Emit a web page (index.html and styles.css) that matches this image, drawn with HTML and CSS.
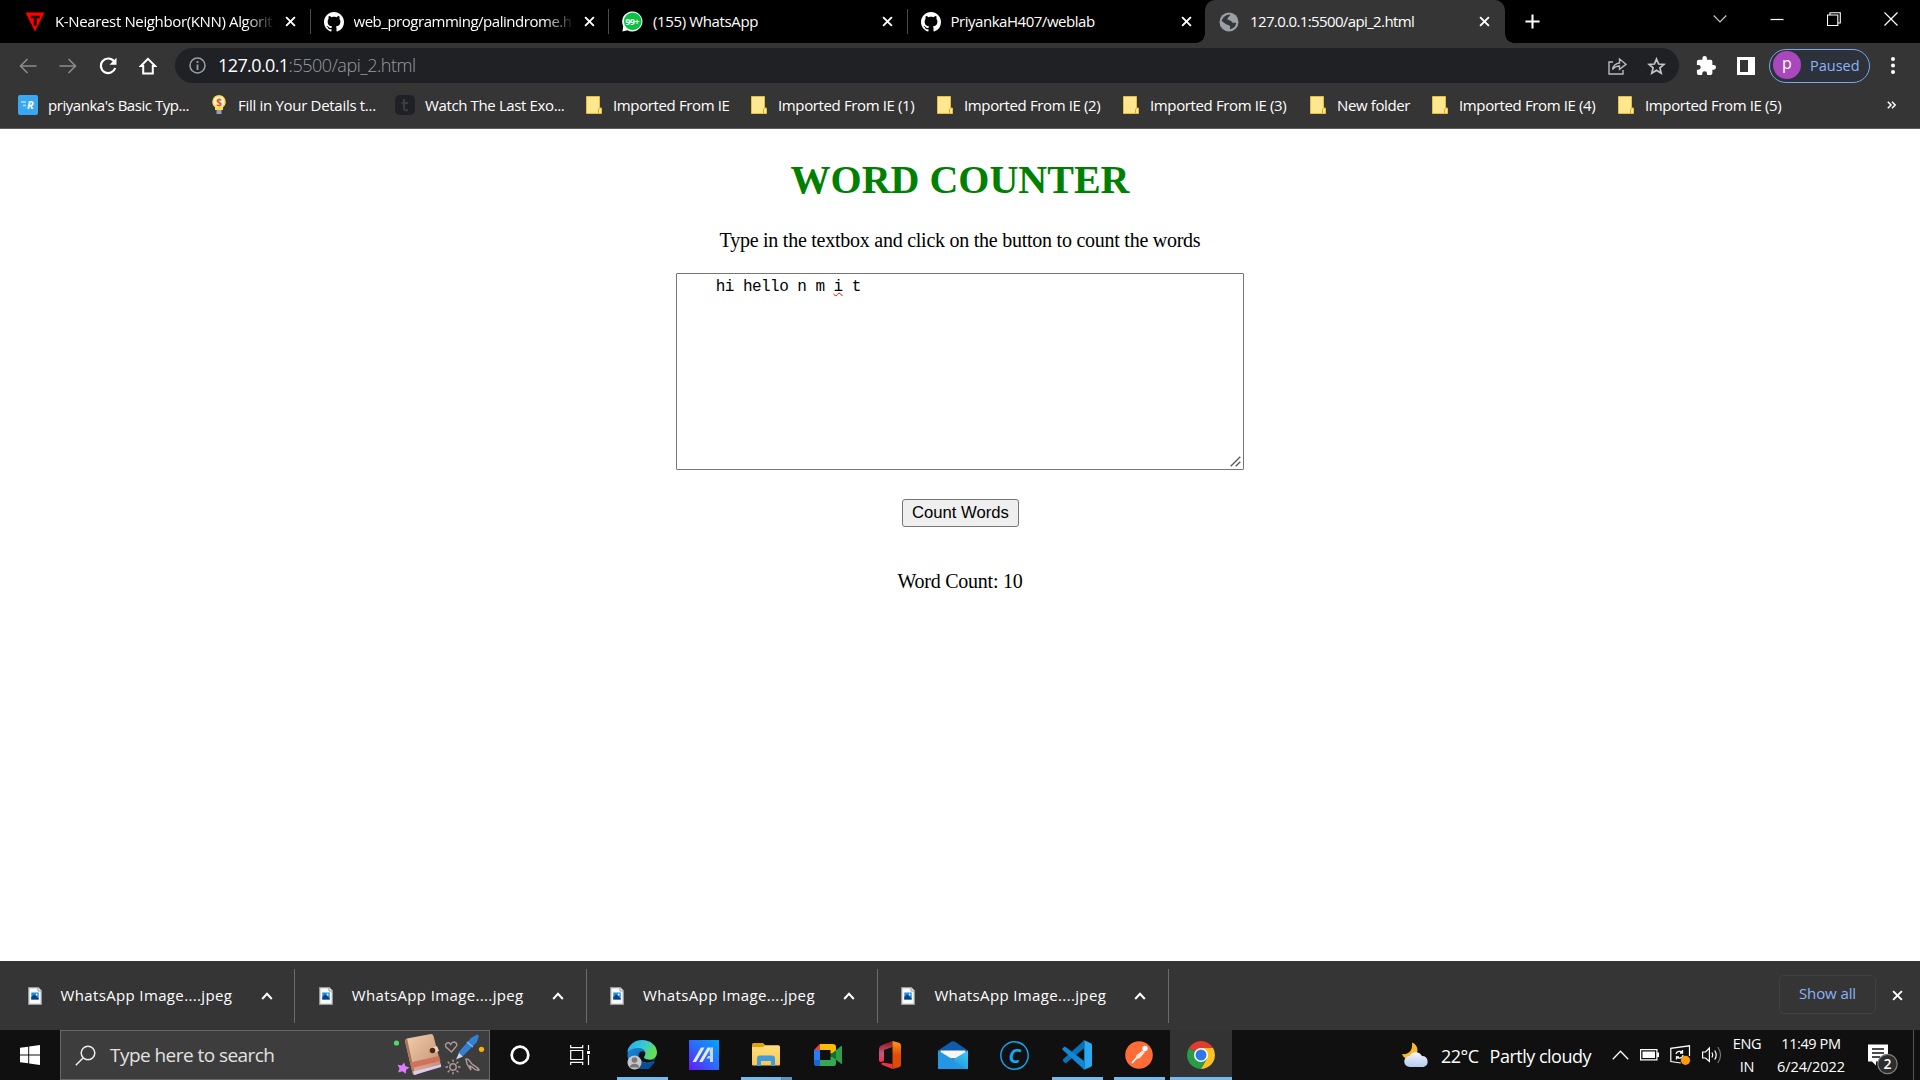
FILE: index.html
```html
<!DOCTYPE html>
<html lang="en">
<head>
<meta charset="utf-8">
<title>Word Counter</title>
<link rel="stylesheet" href="styles.css">
</head>
<body>
<svg class="defs" width="0" height="0">
  <defs>
    <symbol id="close" viewBox="0 0 12 12"><path d="M1.2 1.2l9.6 9.6M10.8 1.2l-9.6 9.6" stroke="#fff" stroke-width="2.1" fill="none"/></symbol>
    <symbol id="github" viewBox="0 0 16 16"><path fill="#fff" d="M8 0C3.58 0 0 3.58 0 8c0 3.54 2.29 6.53 5.47 7.59.4.07.55-.17.55-.38 0-.19-.01-.82-.01-1.49-2.01.37-2.53-.49-2.69-.94-.09-.23-.48-.94-.82-1.13-.28-.15-.68-.52-.01-.53.63-.01 1.08.58 1.23.82.72 1.21 1.87.87 2.33.66.07-.52.28-.87.51-1.07-1.78-.2-3.64-.89-3.64-3.95 0-.87.31-1.59.82-2.15-.08-.2-.36-1.02.08-2.12 0 0 .67-.21 2.2.82.64-.18 1.32-.27 2-.27s1.36.09 2 .27c1.53-1.04 2.2-.82 2.2-.82.44 1.1.16 1.92.08 2.12.51.56.82 1.27.82 2.15 0 3.07-1.87 3.75-3.65 3.95.29.25.54.73.54 1.48 0 1.07-.01 1.93-.01 2.2 0 .21.15.46.55.38A8.01 8.01 0 0 0 16 8c0-4.42-3.58-8-8-8z"/></symbol>
    <symbol id="folder" viewBox="0 0 16 18"><path d="M.5.5h13v11.5h2v5.5H.5z" fill="#ffe790" stroke="#e5bd3c"/><path d="M12.500 17v-3.500l1-1.300" stroke="#d2a72c" fill="none"/></symbol>
    <symbol id="file" viewBox="0 0 14 18"><path d="M.7.7h9.6l3 3v13.600H.7z" fill="#fafafa" stroke="#9b9b9b" stroke-width="1.200"/><path d="M10 .7v3.300h3.300" fill="#fff" stroke="#9b9b9b"/><path d="M3.300 5.500h7.400v7H3.300z" fill="#1f8fe0"/><path d="M3.300 10l3-2.500 4.400 4v1H3.300z" fill="#0b3f86"/><circle cx="8.700" cy="7.500" r=".9" fill="#fff"/></symbol>
    <symbol id="up" viewBox="0 0 12 8"><path d="M1.200 7L6 1.800 10.800 7" stroke="#fff" stroke-width="2" fill="none"/></symbol>
    <linearGradient id="edgeTop" x1="0" y1="0" x2="1" y2=".5"><stop offset="0" stop-color="#2aa6e8"/><stop offset=".5" stop-color="#35c6dd"/><stop offset="1" stop-color="#67e04c"/></linearGradient>
    <linearGradient id="edgeLow" x1="0" y1="0" x2="1" y2="1"><stop offset="0" stop-color="#1b8fe0"/><stop offset="1" stop-color="#0d4f9e"/></linearGradient>
    <linearGradient id="asus" x1="1" y1="0" x2="0" y2="1"><stop offset="0" stop-color="#00a5ff"/><stop offset=".5" stop-color="#2b6bff"/><stop offset="1" stop-color="#6717f0"/></linearGradient>
    <linearGradient id="office" x1="0" y1="0" x2="0" y2="1"><stop offset="0" stop-color="#8d1414"/><stop offset=".6" stop-color="#c9567f"/><stop offset="1" stop-color="#f02f43"/></linearGradient>
    <linearGradient id="officeR" x1="0" y1="0" x2="0" y2="1"><stop offset="0" stop-color="#ff9a1a"/><stop offset=".5" stop-color="#e04a06"/></linearGradient>
    <linearGradient id="mail" x1="0" y1="1" x2="1" y2="0"><stop offset="0" stop-color="#1a7fd4"/><stop offset="1" stop-color="#3ccbf5"/></linearGradient>
    <linearGradient id="book" x1="0" y1="0" x2="1" y2="1"><stop offset="0" stop-color="#f3cfae"/><stop offset="1" stop-color="#bd8a6b"/></linearGradient>
    <linearGradient id="cloud" x1="0" y1="0" x2="0" y2="1"><stop offset="0" stop-color="#f4f7fc"/><stop offset="1" stop-color="#b5cbef"/></linearGradient>
    <linearGradient id="explorer" x1="0" y1="0" x2="0" y2="1"><stop offset="0" stop-color="#ffdf7b"/><stop offset="1" stop-color="#fac74c"/></linearGradient>
  </defs>
</svg>

<header class="tabstrip">
  <div class="tab">
    <svg class="fav" viewBox="0 0 21 20"><path d="M.5 0h20l-10 20z" fill="#f00"/><path d="M6 3.500h9.500V6h-3.200v8H9.200V6H6z" fill="#200"/></svg>
    <span class="tab-title fade t1">K-Nearest Neighbor(KNN) Algorithm</span>
    <svg class="x"><use href="#close"/></svg>
  </div>
  <div class="tab sep">
    <svg class="fav"><use href="#github"/></svg>
    <span class="tab-title fade">web_programming/palindrome.html</span>
    <svg class="x"><use href="#close"/></svg>
  </div>
  <div class="tab sep">
    <svg class="fav wa" viewBox="0 0 21 21"><path d="M10.500.5a10 10 0 1 1-5 18.700L.5 20.500l.7-5.500A10 10 0 0 1 10.500.5z" fill="#fff"/><circle cx="10.700" cy="10.300" r="8.800" fill="#0ac244"/><text x="10.300" y="14" text-anchor="middle">99+</text></svg>
    <span class="tab-title t3">(155) WhatsApp</span>
    <svg class="x"><use href="#close"/></svg>
  </div>
  <div class="tab sep">
    <svg class="fav"><use href="#github"/></svg>
    <span class="tab-title">PriyankaH407/weblab</span>
    <svg class="x"><use href="#close"/></svg>
  </div>
  <div class="tab active">
    <svg class="fav globe" viewBox="0 0 20 20"><circle cx="10" cy="10" r="9.500" fill="#9aa0a6"/><path d="M11 2.500c1 1.500-2.500 2.500-2.500 4.500 0 1.500 3.500 1 4 2.500.5 1.700 2.500 1 4.800 1.500-.8 3.500-3 5.800-6.300 6.300-.5-1.500 1-2.300-.5-3.800-1.500-1.200-3-.3-4.500-2L2.700 9C3.500 5.500 6.500 2.700 11 2.500z" fill="#35363a"/></svg>
    <span class="tab-title t5">127.0.0.1:5500/api_2.html</span>
    <svg class="x"><use href="#close"/></svg>
  </div>
  <svg class="newtab" viewBox="0 0 16 16"><path d="M8 .5v15M.5 8h15" stroke="#fff" stroke-width="2.200"/></svg>
  <div class="winctl">
    <svg width="14" height="10" viewBox="0 0 14 10"><path d="M.7 1.500L7 8l6.300-6.500" stroke="#ccc" stroke-width="1.100" fill="none"/></svg>
    <svg width="14" height="14" viewBox="0 0 14 14"><path d="M.5 7.500h13" stroke="#fff" stroke-width="1.200"/></svg>
    <svg width="14" height="14" viewBox="0 0 14 14"><path d="M.5 3h10.300v10.500H.5zM3 3V.7h10.300v10.300h-2.500" stroke="#fff" stroke-width="1.100" fill="none"/></svg>
    <svg width="14" height="14" viewBox="0 0 14 14"><path d="M.5.5l13 13M13.500.5l-13 13" stroke="#fff" stroke-width="1.200"/></svg>
  </div>
</header>

<nav class="toolbar">
  <div class="navbtns">
    <svg width="18" height="16" viewBox="0 0 18 16"><path d="M17.500 8H1.500M8.500 1L1.500 8l7 7" stroke="#8b8c8e" stroke-width="1.600" fill="none"/></svg>
    <svg width="18" height="16" viewBox="0 0 18 16"><path d="M.5 8h16M9.500 1l7 7-7 7" stroke="#8b8c8e" stroke-width="1.600" fill="none"/></svg>
    <svg width="18" height="18" viewBox="0 0 18 18"><path d="M15 4.300A7.300 7.300 0 1 0 16.200 11" stroke="#fff" stroke-width="2.200" fill="none"/><path d="M17.500.8v7h-7z" fill="#fff"/></svg>
    <svg width="18" height="18" viewBox="0 0 18 18"><path d="M9 1.800L1.800 9h2.400v7.500h9.600V9h2.400z" stroke="#fff" stroke-width="2" fill="none"/></svg>
  </div>
  <div class="omnibox">
    <svg width="17" height="17" viewBox="0 0 17 17"><circle cx="8.500" cy="8.500" r="7.500" stroke="#9aa0a6" stroke-width="1.500" fill="none"/><path d="M8.500 4v2M8.500 7.500V13" stroke="#9aa0a6" stroke-width="1.800"/></svg>
    <span class="url"><b>127.0.0.1</b>:5500/api_2.html</span>
    <svg class="share" width="19" height="18" viewBox="0 0 19 18"><path d="M5 5H1v12h14v-4" stroke="#b8babd" stroke-width="1.400" fill="none"/><path d="M4.500 12.500c.8-4 3-6 7-6.500V2l6.500 5.300-6.500 5V9c-3 0-5 1-7 3.500z" stroke="#b8babd" stroke-width="1.400" fill="none"/></svg>
    <svg width="19" height="18" viewBox="0 0 19 18"><path d="M9.500 2l2.100 5 5.400.4-4.100 3.500 1.300 5.300-4.700-2.900-4.700 2.900 1.300-5.300L2 7.400 7.400 7z" stroke="#c4c6c9" stroke-width="1.700" fill="none"/></svg>
  </div>
  <svg class="puzzle" width="20" height="20" viewBox="1 1 22 22"><path fill="#fff" d="M20.500 11H19V7a2 2 0 0 0-2-2h-4V3.500a2.500 2.500 0 0 0-5 0V5H4a2 2 0 0 0-2 2v3.800h1.500a2.700 2.700 0 0 1 0 5.400H2V20a2 2 0 0 0 2 2h3.800v-1.500a2.700 2.700 0 0 1 5.400 0V22H17a2 2 0 0 0 2-2v-4h1.500a2.500 2.500 0 0 0 0-5z"/></svg>
  <svg class="panel" width="18" height="18" viewBox="0 0 18 18"><path fill="#fff" fill-rule="evenodd" d="M0 0h18v18H0zM3 3v12h8V3z"/></svg>
  <div class="profile"><span class="avatar">p</span><span>Paused</span></div>
  <svg class="dots" width="4" height="17" viewBox="0 0 4 17"><g fill="#fff"><circle cx="2" cy="2" r="2"/><circle cx="2" cy="8.500" r="2"/><circle cx="2" cy="15" r="2"/></g></svg>
</nav>

<div class="bookmarks">
  <div class="bm"><svg class="wide" width="20" height="20" viewBox="0 0 20 20"><rect width="20" height="20" rx="2" fill="#38a8f5"/><path d="M3 7h5M5 10.500h3" stroke="#bfe3fc" stroke-width="1.300"/><text class="rtext" x="9" y="14">R</text></svg><span class="b1">priyanka's Basic Typ...</span></div>
  <div class="bm"><svg width="16" height="20" viewBox="0 0 16 20"><path d="M8 0a7 7 0 0 1 4 12.500V15H4v-2.500A7 7 0 0 1 8 0z" fill="#ffd84f"/><circle cx="8" cy="6.800" r="5.300" fill="#fff3d0"/><path d="M5.500 15h5v4h-5z" fill="#8fa3b5"/><text class="dollar" x="8" y="10.500" text-anchor="middle">$</text></svg><span class="b2">Fill in Your Details t...</span></div>
  <div class="bm"><svg class="wide" width="20" height="20" viewBox="0 0 20 20"><rect width="20" height="20" rx="5" fill="#202126"/><path d="M9 4v9c0 2 1 2.500 4 2M6.500 8H13" stroke="#3c3d43" stroke-width="2" fill="none"/></svg><span>Watch The Last Exo...</span></div>
  <div class="bm"><svg width="16" height="18"><use href="#folder"/></svg><span>Imported From IE</span></div>
  <div class="bm"><svg width="16" height="18"><use href="#folder"/></svg><span>Imported From IE (1)</span></div>
  <div class="bm"><svg width="16" height="18"><use href="#folder"/></svg><span>Imported From IE (2)</span></div>
  <div class="bm"><svg width="16" height="18"><use href="#folder"/></svg><span>Imported From IE (3)</span></div>
  <div class="bm"><svg width="16" height="18"><use href="#folder"/></svg><span>New folder</span></div>
  <div class="bm"><svg width="16" height="18"><use href="#folder"/></svg><span>Imported From IE (4)</span></div>
  <div class="bm"><svg width="16" height="18"><use href="#folder"/></svg><span>Imported From IE (5)</span></div>
  <svg class="more" width="9" height="8" viewBox="0 0 9 8"><path d="M.8.8L4 4 .8 7.200M5 .8L8.200 4 5 7.200" stroke="#fff" stroke-width="1.500" fill="none"/></svg>
</div>

<main class="page">
  <h1>WORD COUNTER</h1>
  <p class="hint">Type in the textbox and click on the button to count the words</p>
  <div class="box">    hi hello n m <span class="typo">i</span> t<svg class="grip" width="11" height="11" viewBox="0 0 11 11"><path d="M.7 10.300L10.300.7M5.700 10.300l4.600-4.600" stroke="#555" stroke-width="1.300"/></svg></div>
  <button class="count">Count Words</button>
  <p class="result">Word Count: 10</p>
</main>

<section class="downloads">
  <div class="dl"><svg class="f"><use href="#file"/></svg><span>WhatsApp Image....jpeg</span><svg class="u"><use href="#up"/></svg></div>
  <div class="dl"><svg class="f"><use href="#file"/></svg><span>WhatsApp Image....jpeg</span><svg class="u"><use href="#up"/></svg></div>
  <div class="dl"><svg class="f"><use href="#file"/></svg><span>WhatsApp Image....jpeg</span><svg class="u"><use href="#up"/></svg></div>
  <div class="dl"><svg class="f"><use href="#file"/></svg><span>WhatsApp Image....jpeg</span><svg class="u"><use href="#up"/></svg></div>
  <div class="showall">Show all</div>
  <svg class="x"><use href="#close"/></svg>
</section>

<footer class="taskbar">
  <div class="start"><svg width="20" height="20" viewBox="0 0 20 20"><path fill="#fff" d="M0 2.800l8.200-1.100v7.800H0zM9.200 1.500L20 0v9.500H9.200zM0 10.500h8.200v7.800L0 17.200zM9.200 10.500H20V20L9.200 18.500z"/></svg></div>
  <div class="search">
    <svg width="21" height="21" viewBox="0 0 21 21"><circle cx="13" cy="8" r="6.800" stroke="#eee" stroke-width="1.500" fill="none"/><path d="M8.300 12.800L.8 20.300" stroke="#eee" stroke-width="1.500"/></svg>
    <span>Type here to search</span>
    <svg class="art" width="92" height="44" viewBox="0 0 92 44">
      <circle cx="3.500" cy="10" r="2.600" fill="#51d86d"/><circle cx="88.500" cy="16.300" r="2.600" fill="#ffb300"/>
      <path d="M11 29.500l1.500 3.700 4 1.300-3.300 2.200-.5 4-3.200-2.500-4.500 1.300 1.500-4-2-3.800 4.300.7z" fill="#e07bff"/>
      <path d="M12 8q0-2 2-2.500L38 1q2 0 2.500 2L48 32 22 42q-2 0-2.500-2z" fill="url(#book)"/>
      <path d="M12 8q0-2 2-2.500L22 42q-2 0-2.500-2z" fill="#a9745a"/>
      <path d="M17.500 29.500L46 23l1.500 5L19 35z" fill="#d0705f"/><path d="M20 38.500l28-7v2.500L21 42z" fill="#dccaf5"/>
      <path d="M38 15l6-2 2 5-6 2z" fill="#f1d2b4"/><circle cx="39.500" cy="17.500" r="2.800" fill="#4b2718"/>
      <path d="M58.500 19l-5.500-5c-2-3 2.500-6.500 4.700-2.500C60 7 65 9.500 63.500 13z" stroke="#b09a98" stroke-width="1.400" fill="none"/>
      <path d="M65 20l13-15 6-3.500 2 1.500-2 6-14 14z" fill="#3180d3"/><path d="M66 20l4 3.500-7 3z" fill="#d9d4ea"/><path d="M74 9l6 5" stroke="#84baf5" stroke-width="1.300"/>
      <g stroke="#b09a98" stroke-width="1.400" fill="none"><circle cx="60" cy="34" r="3.200"/><path d="M60 26.500v2.500M60 39v2.500M52.500 34h2.500M65 34h2.500M54.700 28.700l1.800 1.800M63.500 37.500l1.800 1.800M65.300 28.700l-1.800 1.800M56.500 37.500l-1.800 1.800"/><path d="M73 26c3-1 4 3 6 5s6 3 7 6c-3 1-5-1-7-3l-2-1 1 4-4-6z"/></g>
    </svg>
  </div>
  <div class="app w62"><svg width="20" height="20" viewBox="0 0 20 20"><circle cx="10" cy="10" r="8.300" stroke="#fff" stroke-width="2.700" fill="none"/></svg></div>
  <div class="app tv"><svg width="21" height="20" viewBox="0 0 21 20"><path d="M.7 5.500h12v9H.7zM.7 0v2.700h12V0M.7 20v-2.700h12V20M18.500 0v5M18.500 10v10" stroke="#fff" stroke-width="1.200" fill="none"/><path d="M17 6h3v3h-3z" fill="#fff"/></svg></div>
  <div class="app on"><svg width="30" height="30" viewBox="0 0 30 30"><circle cx="14.500" cy="15" r="14" fill="url(#edgeLow)"/><path d="M.3 12C1.500 4.500 8 0 15 0c8.500 0 15 5.500 15 12.500 0 4.500-3.500 7-7.500 7-3 0-5.500-1-5.500-2.200 0-1 1.400-1.600 1.400-4.200 0-3-3.400-5-7.400-5C6.500 8.100 3 9.500.3 12z" fill="url(#edgeTop)"/><path d="M11.500 14c-.8 5 3.500 9.500 9 9.500 3 0 5-1 7.800-1.800L22 29H12z" fill="#0c4c93"/><path d="M18.300 13c-1-2.500-5-2-6.300.5-1.500 3.500 1.500 8.500 8 9 4 0 6.500-1.500 9-3.500-3 1.300-12 1.800-12-1.700 0-1 1.500-2 1.300-4.300z" fill="#111"/><circle cx="7.500" cy="22.500" r="7" fill="#c9c7c5"/><circle cx="7.500" cy="20" r="2.800" fill="#777"/><path d="M2.800 27.500c0-5 9.400-5 9.400 0z" fill="#777"/></svg></div>
  <div class="app"><svg width="30" height="30" viewBox="0 0 30 30"><path d="M0 0h30v30H0z" fill="url(#asus)"/><path d="M3.500 22L12 7.500h3.500L7 22zM10 22l8.500-14.500H22L13.500 22z" fill="#e6ecff"/><path d="M20.500 10l1.500-2.500h2V22h-3v-3.500h-3.500l1.500-2.500h2z" fill="#c9d6ff"/></svg></div>
  <div class="app on split"><svg width="28" height="24" viewBox="0 0 28 24"><path d="M0 1.500Q0 0 1.500 0H11l2.500 2.500V6H0z" fill="#e3a008"/><path d="M0 4h11l2-1.800h13.500Q28 2.200 28 4v17.500q0 1-1 1H1q-1 0-1-1z" fill="url(#explorer)"/><path d="M5 23v-7.500q0-3 3-3h12q3 0 3 3V23h-4v-5H9v5z" fill="#3f9be0"/></svg></div>
  <div class="app"><svg width="28" height="24" viewBox="0 0 28 24"><path d="M6 1h12.500Q22 1 22 4v4l-5.500 3V7H6z" fill="#fbbc04"/><path d="M6 .8V7H0z" fill="#ea4335"/><path d="M0 7h6v10H0z" fill="#2a7df0"/><path d="M0 17h6v6H2q-2 0-2-2z" fill="#1b63d2"/><path d="M6 17h10.500v-4l5.500 3v5q0 2-2 2H6z" fill="#34a853"/><path d="M16.500 12L27 3q1-.5 1 .7v16.500q0 1.300-1 .6z" fill="#2f9e4b"/><path d="M16.500 12L22 7.500v9z" fill="#13702e"/></svg></div>
  <div class="app"><svg width="22" height="28" viewBox="0 0 22 28"><path d="M13.500 0L2.500 4.200Q0 5.200 0 8v11q0 2.500 2 2l3-1V9l8.500-3z" fill="url(#office)"/><path d="M3 21.500L13.500 23v5L3.500 24q-2-1-.5-2.500z" fill="#f02f43"/><path d="M13.500 0L20 1.800q2 .7 2 2.700v19q0 2-2 2.700L13.500 28z" fill="url(#officeR)"/></svg></div>
  <div class="app"><svg width="30" height="28" viewBox="0 0 30 28"><path d="M0 9.500L13.500.6q1.500-.9 3 0L30 9.500v5H0z" fill="#0d5cae"/><path d="M2.500 9.500h25v8h-25z" fill="#f6f6f6"/><path d="M0 9.500l15 9 15-9V28H0z" fill="url(#mail)"/><path d="M0 9.500l28 18.500H0z" fill="#2397e4"/></svg></div>
  <div class="app"><svg width="29" height="29" viewBox="0 0 29 29"><circle cx="14.500" cy="14.500" r="13.700" stroke="#11a2e8" stroke-width="1.500" fill="#111"/><text class="ctext" x="14.500" y="21.500" text-anchor="middle">C</text></svg></div>
  <div class="app on"><svg width="30" height="30" viewBox="0 0 30 30"><path d="M1 21l2.500 2.500L22 8.500V.5L.8 19.500z" fill="#0a70b8"/><path d="M.8 10q-1-1 0-2L3 6.500 22 21v8.500z" fill="#1188d6"/><path d="M21.500 0L29 3.300q1 .5 1 1.700v20q0 1.200-1 1.700L21.500 30q.8-.5.8-2V2q0-1.500-.8-2z" fill="#29a9f2"/></svg></div>
  <div class="app on"><svg width="28" height="28" viewBox="0 0 28 28"><circle cx="14" cy="14" r="13.800" fill="#ff6c37"/><circle cx="20" cy="7.500" r="2.700" fill="#fff"/><path d="M17.500 10.500l-7 7.500-3.500 4" stroke="#fff" stroke-width="1.700" fill="none"/><path d="M11.500 14l6.500-4.500 2 1.500-5 6-4 1.500z" fill="#ffe9e0"/></svg></div>
  <div class="app on current"><svg width="28" height="28" viewBox="0 0 28 28"><path d="M14 14L1.900 7A14 14 0 0 1 26.100 7z" fill="#e33b2e"/><path d="M14 14l6 3.500L14 28A14 14 0 0 1 1.900 7z" fill="#2a9c48"/><path d="M14 7h12.100A14 14 0 0 1 14 28l6.100-10.500z" fill="#fcc31f"/><circle cx="14" cy="14" r="7" fill="#fff"/><circle cx="14" cy="14" r="5.500" fill="#3277e8"/></svg></div>

  <div class="weather">
    <svg width="28" height="26" viewBox="0 0 28 26"><path d="M10 .5c6 2 7.500 10 2.500 14.500-4.500 4-11 2-12.500-3C7 13 11 8 10 .5z" fill="#fbb92b"/><path d="M8 25a5.500 5.500 0 0 1-.5-11 7 7 0 0 1 12.500 0 5.600 5.600 0 0 1 1.500 11z" fill="url(#cloud)"/></svg>
    <span class="temp">22°C</span><span>Partly cloudy</span>
  </div>
  <div class="tray">
    <svg width="17" height="10" viewBox="0 0 17 10"><path d="M.8 9.300L8.500 1.300l7.700 8" stroke="#fff" stroke-width="1.300" fill="none"/></svg>
    <svg width="19" height="12" viewBox="0 0 19 12"><path d="M.6.6h16.300v10.300H.6z" stroke="#fff" stroke-width="1.200" fill="none"/><path d="M2.500 2.500h12.500V9H2.500zM17 3.500h2v4.500h-2z" fill="#fff"/></svg>
    <svg width="21" height="20" viewBox="0 0 21 20"><path d="M19.500 11V.8L.8 3.300v13.200l10 1.500" stroke="#fff" stroke-width="1.200" fill="none"/><path d="M6 9c.5-3 4.500-3.500 6.500-1.500V5M12.500 8h-2.500M13 10c0 3-4 4-6.500 2v2.500M6.500 12h2.500" stroke="#fff" stroke-width="1.300" fill="none"/><circle cx="15.500" cy="15.300" r="4.600" fill="#ff9a0a"/></svg>
    <svg width="20" height="18" viewBox="0 0 20 18"><path d="M.6 6h3L7.400 2v13.500L3.600 12h-3z" stroke="#fff" stroke-width="1.200" fill="none"/><path d="M10 6.500q1.500 2.500 0 5M12.700 4.500q3 4.500 0 9" stroke="#fff" stroke-width="1.200" fill="none"/><path d="M15.800 1q5.500 8 0 16" stroke="#777" stroke-width="1.200" fill="none"/></svg>
  </div>
  <div class="stack lang"><span>ENG</span><span>IN</span></div>
  <div class="stack clock"><span>11:49 PM</span><span>6/24/2022</span></div>
  <div class="notif"><svg width="31" height="31" viewBox="0 0 31 31"><path d="M0 .5h20v17h-12v4l-4-4H0z" fill="#fff"/><path d="M4 5h12M4 9h12M4 13h8" stroke="#111" stroke-width="1.300"/><circle cx="19.500" cy="20" r="9.700" fill="#2d2d2d" stroke="#808080" stroke-width="1.200"/><text class="badge" x="19.500" y="25" text-anchor="middle">2</text></svg></div>
</footer>
</body>
</html>
```
FILE: styles.css
```css
* { box-sizing: border-box; }
html, body { height: 100%; }
body {
  margin: 0;
  width: 1920px;
  height: 1080px;
  overflow: hidden;
  display: grid;
  grid-template-rows: 43px 45px 41px 832px 69px 50px;
  background: #fff;
  color: #fff;
  font-family: "Open Sans", "Noto Sans", sans-serif;
  font-size: 15px;
  white-space: nowrap;
}
svg { display: block; flex: none; }
.defs { position: absolute; }

/* Tab strip */
.tabstrip { background: #000; display: flex; align-items: center; padding-left: 11px; }
.tab { width: 298.5px; height: 43px; display: flex; align-items: center; padding-left: 14px; position: relative; }
.tab.sep::before { content: ""; position: absolute; left: 0; top: 9px; width: 1px; height: 25px; background: #4a4a4a; }
.fav { width: 20px; height: 20px; margin-right: 10px; }
.wa { width: 21px; height: 21px; }
.wa text { font: bold 8.5px "Open Sans", sans-serif; letter-spacing: -.4px; fill: #fff; }
.tab-title { width: 218px; overflow: hidden; letter-spacing: -.47px; margin-top: -2px; }
.t1 { letter-spacing: -.36px; }
.t3 { letter-spacing: -.37px; width: 217px; }
.t5 { letter-spacing: -.62px; padding-left: 1px; }
.fade { -webkit-mask-image: linear-gradient(90deg, #000 190px, transparent 221px); mask-image: linear-gradient(90deg, #000 190px, transparent 221px); }
.x { width: 11px; height: 11px; }
.tab .x { margin-left: 12px; }
.tab.active { background: #353535; border-radius: 10px 10px 0 0; width: 300px; }
.tab.active::before, .tab.active::after { content: ""; position: absolute; bottom: 0; width: 9px; height: 9px; }
.tab.active::before { left: -9px; background: radial-gradient(circle at 0 0, #000 8.5px, #353535 9px); }
.tab.active::after { right: -9px; background: radial-gradient(circle at 100% 0, #000 8.5px, #353535 9px); }
.newtab { width: 15px; height: 15px; margin-left: 20px; }
.winctl { margin-left: auto; margin-right: 22px; display: flex; align-items: center; gap: 43px; margin-top: -5px; }

/* Toolbar */
.toolbar { background: #353535; display: flex; align-items: center; padding-left: 19px; }
.navbtns { display: flex; gap: 22px; align-items: center; width: 156px; }
.omnibox { width: 1504px; height: 35px; border-radius: 18px; background: #202125; display: flex; align-items: center; padding: 0 13px 0 14px; }
.url { margin-left: 12px; font-size: 18px; letter-spacing: -.46px; color: #9a9da1; font-weight: 300; margin-top: -1px; }
.url b { font-weight: 400; color: #fff; letter-spacing: -.6px; }
.share { margin-left: auto; margin-right: 20px; }
.puzzle { margin-left: 17px; }
.panel { margin-left: 21px; }
.profile { margin-left: 14px; width: 101px; height: 34px; border: 1.5px solid #7ba6ea; border-radius: 17px; background: #2c313a; display: flex; align-items: center; gap: 9px; padding: 0 0 1px 3px; font-size: 14.5px; color: #8ab4f8; }
.avatar { width: 28px; height: 28px; border-radius: 50%; background: #ab47bc; color: #fff; text-align: center; line-height: 24px; font-size: 16px; }
.dots { margin-left: 21px; }

/* Bookmarks bar */
.bookmarks { background: #353535; border-bottom: 1px solid #5c5c5c; display: grid; grid-template-columns: 193px 184px 191px 165px 186px 186px 187px 122px 186px 269px auto; align-items: center; padding-left: 18px; padding-bottom: 6px; letter-spacing: -.37px; }
.bm { display: flex; align-items: center; gap: 11px; }
.bm svg.wide { margin-right: -1px; }
.b1 { letter-spacing: -.46px; }
.b2 { letter-spacing: -.3px; }
.rtext { font: italic bold 11px "Open Sans", sans-serif; fill: #fff; }
.dollar { font: bold 10px "Open Sans", sans-serif; fill: #e8501d; }

/* Document */
.page { background: #fff; color: #000; font-family: "Liberation Serif", "Times New Roman", serif; font-size: 20px; display: flex; flex-direction: column; align-items: center; }
h1 { font-size: 40px; line-height: 46px; margin: 28px 0 0; color: green; }
.hint { margin: 26px 0 0; line-height: 23px; letter-spacing: -.25px; }
.box { position: relative; margin-top: 21px; width: 568px; height: 197px; border: 1px solid #767676; border-radius: 1px; padding: 2.5px; font: 16px/20px "Liberation Mono", monospace; letter-spacing: -.54px; white-space: pre; }
.typo { text-decoration: underline wavy #f00 1px; text-underline-offset: 1px; }
.grip { position: absolute; right: 2px; bottom: 2px; }
.count { margin: 29px 0 0 1px; width: 117px; height: 28px; padding: 0; border: 1px solid #767676; border-radius: 3px; background: #efefef; font: 16.67px "Liberation Sans", Arial, sans-serif; color: #000; }
.result { margin: 43px 0 0; line-height: 23px; letter-spacing: -.25px; }

/* Download shelf */
.downloads { background: #353535; display: flex; align-items: center; padding-left: 4px; }
.dl { width: 291.3px; height: 54px; border-right: 1px solid #6c6c6c; display: flex; align-items: center; padding-left: 23.5px; }
.dl span { width: 200px; margin-left: 19px; letter-spacing: .36px; margin-top: -1px; }
.f { width: 14px; height: 18px; }
.u { width: 12px; height: 8px; }
.showall { margin-left: auto; width: 97px; height: 39px; border: 1px solid #404144; border-radius: 5px; color: #8ab4f8; display: flex; align-items: center; justify-content: center; letter-spacing: -.1px; padding-bottom: 2px; margin-top: -3px; }
.downloads > .x { margin: 0 17px 0 16px; }

/* Taskbar */
.taskbar { background: #101010; display: flex; align-items: center; }
.start { width: 60px; display: flex; justify-content: center; }
.search { width: 430px; height: 50px; background: #3d3d3d; border: 1px solid #686868; display: flex; align-items: center; padding-left: 14px; font-size: 19px; letter-spacing: -.55px; color: #e2e2e2; }
.search span { margin-left: 14px; width: 283px; }
.app { width: 62.1px; height: 50px; display: flex; align-items: center; justify-content: center; position: relative; }
.app.w62 { width: 60px; }
.app.tv { width: 61px; }
.app.on::after { content: ""; position: absolute; left: 6px; right: 5px; bottom: 0; height: 3px; background: #76b9ed; }
.app.split::after { background: linear-gradient(90deg, #76b9ed 40px, #4a6d88 40px, #5e93bd 41px); }
.app.current { background: #333; }
.app.current::after { left: 0; right: 0; }
.weather { margin-left: 170px; display: flex; align-items: center; font-size: 18px; letter-spacing: -.5px; width: 210px; }
.weather span { padding-top: 2px; }
.temp { margin: 0 11px 0 11px; }
.tray { display: flex; align-items: center; gap: 11px; width: 120px; }
.stack { display: flex; flex-direction: column; align-items: center; line-height: 23px; }
.lang { width: 30px; font-size: 14.5px; letter-spacing: -.3px; }
.clock { width: 70px; margin-left: 14px; font-size: 14.5px; letter-spacing: -.1px; }
.clock span:first-child { letter-spacing: -.4px; }
.notif { margin-left: 22px; width: 46px; border-right: 1px solid #555; height: 50px; padding-top: 14px; }
.badge { font: 600 14px "Open Sans", sans-serif; fill: #fff; }
.ctext { font: italic bold 20px "Open Sans", sans-serif; fill: #13a8f5; }
```
